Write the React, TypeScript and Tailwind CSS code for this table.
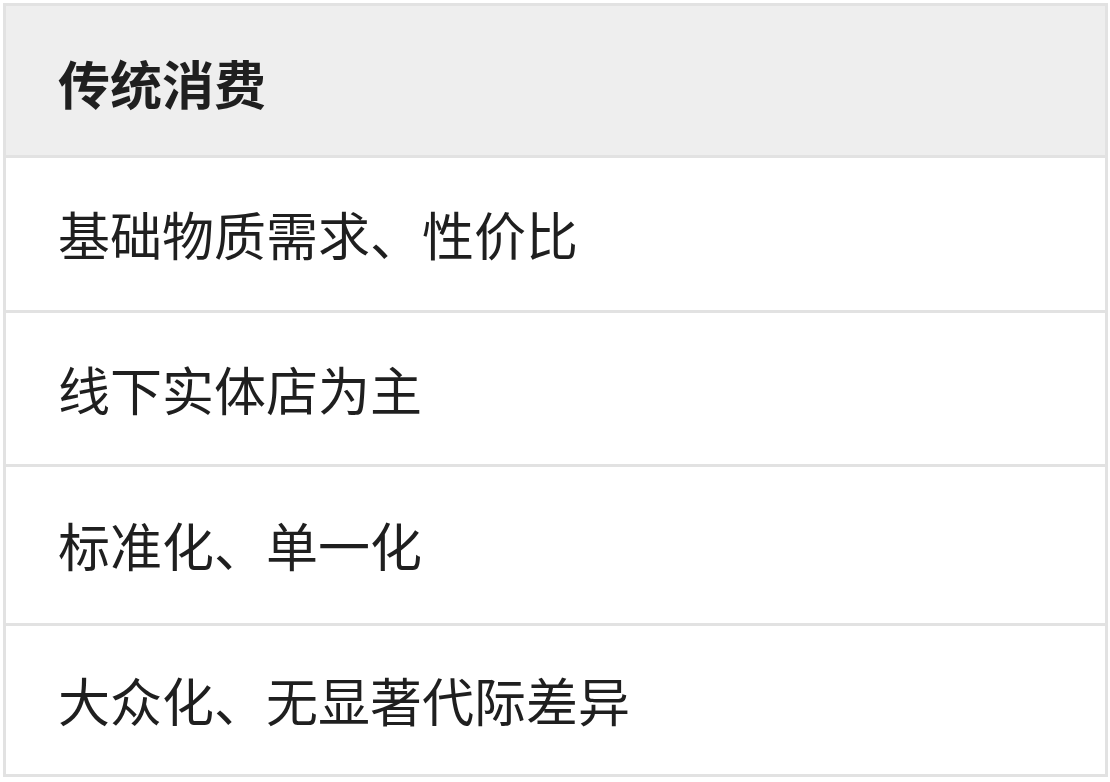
export default function App() {
  const rows: { text: string; h: string }[] = [
    { text: "基础物质需求、性价比", h: "h-[152px]" },
    { text: "线下实体店为主", h: "h-[151px]" },
    { text: "标准化、单一化", h: "h-[156px]" },
    { text: "大众化、无显著代际差异", h: "h-[148px]" },
  ];

  return (
    <div className="w-[1110px] h-[782px] bg-white pt-[3px] pl-[3px] font-['Noto_Sans_CJK_SC','Noto_Sans',sans-serif] text-[#1f1f1f]">
      <div className="w-[1105px] border-[3px] border-[#e2e2e2] flex flex-col">
        <div className="h-[149px] bg-[#eeeeee] flex items-center pl-[52px] pt-[4px] text-[52px] font-bold leading-none">
          传统消费
        </div>
        {rows.map((r) => (
          <div
            key={r.text}
            className={`${r.h} border-t-[3px] border-[#e2e2e2] flex items-center pl-[52px] text-[52px] leading-none box-content`}
          >
            {r.text}
          </div>
        ))}
      </div>
    </div>
  );
}
